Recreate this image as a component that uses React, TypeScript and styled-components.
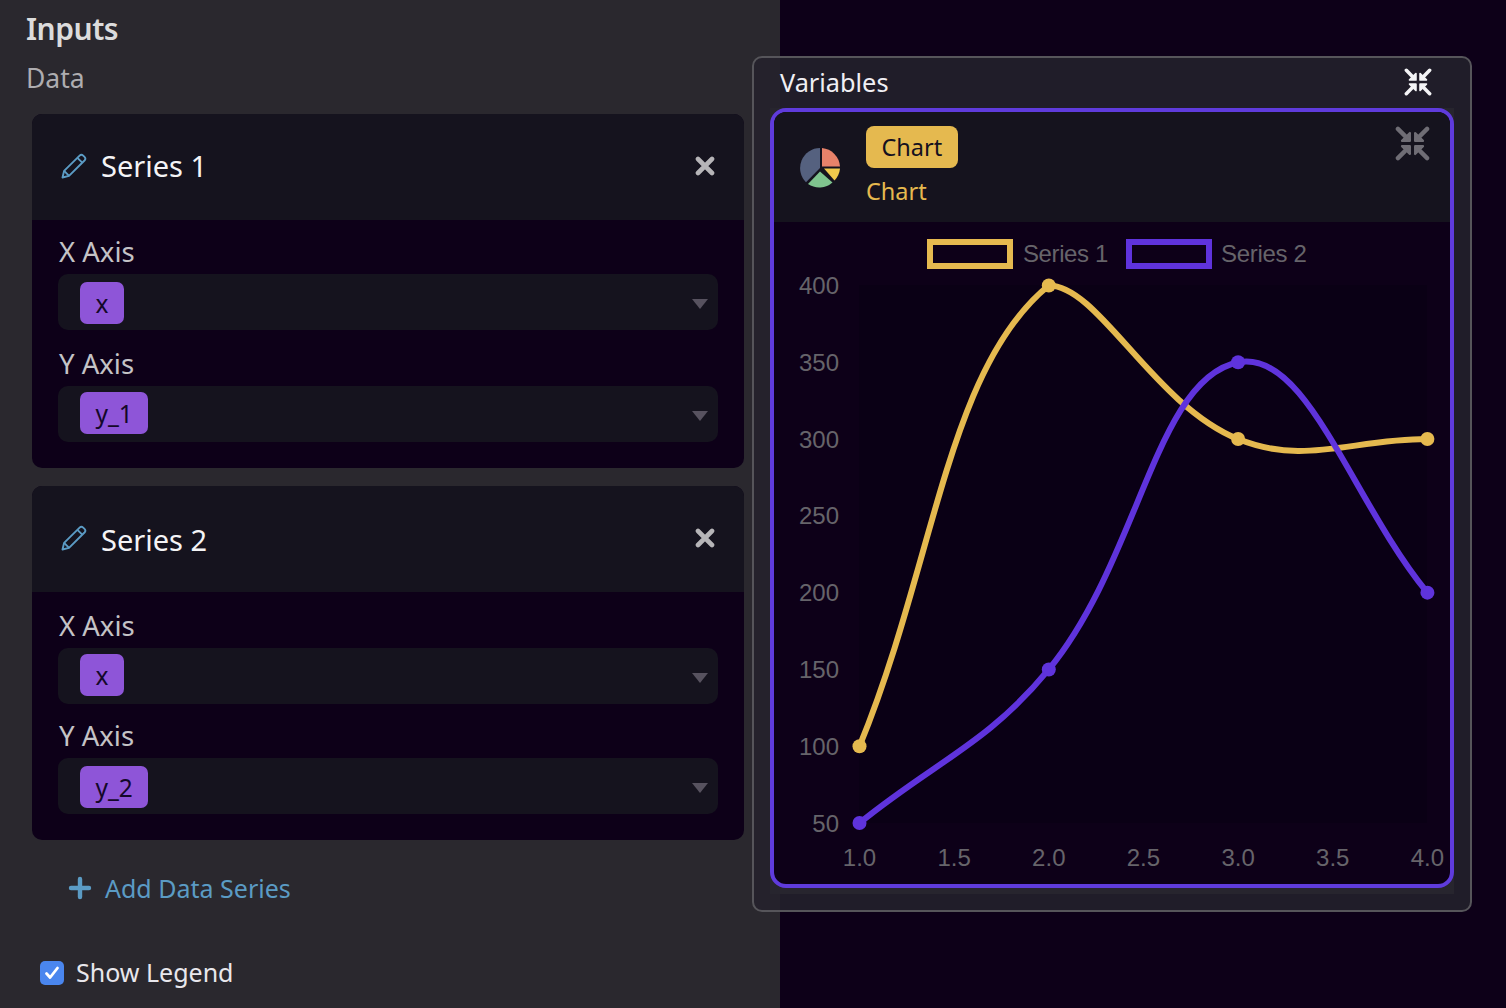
import styled, { createGlobalStyle } from "styled-components";

const GlobalStyle = createGlobalStyle`
  html, body {
    margin: 0;
    padding: 0;
    background: #0d0018;
    font-family: "Noto Sans", "Open Sans", sans-serif;
  }
  * { box-sizing: border-box; }
`;

const Page = styled.div`
  position: relative;
  width: 1506px;
  height: 1008px;
  overflow: hidden;
  background: #0d0018;
`;

const Sidebar = styled.aside`
  width: 780px;
  height: 1008px;
  background: #2a282e;
  padding: 7px 0 0 26px;
`;

const Title = styled.h1`
  margin: 0;
  height: 44px;
  font-size: 30px;
  line-height: 44px;
  font-weight: 600;
  letter-spacing: -0.5px;
  color: #dcdcdc;
`;

const Subtitle = styled.h2`
  margin: 9px 0 0;
  height: 36px;
  font-size: 26.5px;
  line-height: 36px;
  font-weight: 400;
  color: #aeadb0;
`;

const Cards = styled.div`
  margin: 18px 0 0 6px;
  width: 712px;
  display: flex;
  flex-direction: column;
  gap: 18px;
`;

const Card = styled.section`
  border-radius: 10px;
  overflow: hidden;
  background: #0d0018;
`;

const CardHeader = styled.header`
  height: 106px;
  background: #15131e;
  display: flex;
  align-items: center;
  padding: 0 29px 2px 29px;
`;

const CardName = styled.span<{ $drop: number }>`
  margin-left: 14px;
  flex: 1;
  padding-bottom: ${p => 2 - p.$drop}px;
  padding-top: ${p => p.$drop}px;
  font-size: 29px;
  color: #f4f4f6;
`;

const CardBody = styled.div<{ $top: number }>`
  padding: ${p => p.$top}px 26px 26px;
`;

const FieldLabel = styled.div`
  height: 28px;
  margin-bottom: 7px;
  padding-left: 1px;
  font-size: 27.5px;
  line-height: 26px;
  color: #c4c3c6;
`;

const SelectBox = styled.div<{ $inset: number; $after: number }>`
  height: 56px;
  margin-bottom: ${p => p.$after}px;
  border-radius: 10px;
  background: #15131e;
  padding: ${p => p.$inset}px 10px 0 22px;
  display: flex;
  align-items: flex-start;
  justify-content: space-between;
  &:last-child { margin-bottom: 0; }
`;

const Chip = styled.span`
  height: 42px;
  min-width: 44px;
  padding: 0 15.5px;
  border-radius: 7px;
  background: #8e55d8;
  color: #14082a;
  font-size: 24.5px;
  line-height: 44px;
  text-align: center;
`;

const Caret = styled.i<{ $inset: number }>`
  width: 0;
  height: 0;
  margin-top: ${p => 25 - p.$inset}px;
  border-left: 8.5px solid transparent;
  border-right: 8.5px solid transparent;
  border-top: 10px solid #57525f;
`;

const AddRow = styled.div`
  margin: 30px 0 0 42px;
  height: 36px;
  display: flex;
  align-items: center;
  gap: 13px;
  font-size: 25px;
  color: #5b9bc4;
`;

const LegendToggle = styled.label`
  margin: 49px 0 0 14px;
  height: 34px;
  display: flex;
  align-items: center;
  gap: 12px;
  font-size: 25px;
  color: #e8e7ec;
`;

const CheckBox = styled.span`
  width: 24px;
  height: 24px;
  margin-top: 2px;
  border-radius: 5px;
  background: #4a86ee;
  display: flex;
  align-items: center;
  justify-content: center;
`;

/* floating window over the page */
const VariablesWindow = styled.div`
  position: absolute;
  left: 752px;
  top: 56px;
  width: 720px;
  height: 856px;
  border: 2px solid #56555a;
  border-radius: 10px;
  background: rgba(36, 34, 44, 0.86);
  padding: 0 16px;
`;

const WindowBar = styled.div`
  height: 50px;
  padding: 0 22px 2px 10px;
  display: flex;
  align-items: center;
  justify-content: space-between;
  font-size: 25.3px;
  color: #f0eff4;
`;

const WindowCanvas = styled.div`
  width: 684px;
  height: 786px;
  background: #27252e;
`;

const Widget = styled.div`
  height: 780px;
  border: 4px solid #5f3bdc;
  border-radius: 16px;
  overflow: hidden;
  background: #0d0018;
`;

const WidgetHeader = styled.div`
  position: relative;
  height: 110px;
  background: #15131e;
  display: flex;
  align-items: flex-start;
  padding: 14px 0 0 25px;
`;

const WidgetInfo = styled.div`
  margin-left: 25px;
  display: flex;
  flex-direction: column;
  align-items: flex-start;
`;

const Badge = styled.span`
  height: 42px;
  padding: 0 15.5px;
  border-radius: 8px;
  background: #e5b94f;
  color: #14101f;
  font-size: 23.5px;
  line-height: 42px;
`;

const WidgetName = styled.span`
  margin-top: 6px;
  font-size: 23.5px;
  line-height: 34px;
  color: #e5b94f;
`;

const CornerIcon = styled.span`
  position: absolute;
  right: 20px;
  top: 14px;
  line-height: 0;
`;

const Chart = styled.svg`
  display: block;
  width: 676px;
  height: 662px;
  font-family: "Liberation Sans", Arial, sans-serif;
  font-size: 24px;
`;

const PieWrap = styled.span`
  margin-top: 21px;
  line-height: 0;
`;

function PencilIcon() {
  return (
    <svg width='26' height='26' viewBox='0 0 26 26' fill='none' stroke='#5b9bc4' strokeWidth='1.9' strokeLinejoin='round'>
      <path d='M1.5 24.5l1.6-6.6L18.6 2.6a2.6 2.6 0 0 1 3.6 0l1.3 1.3a2.6 2.6 0 0 1 0 3.6L8 22.9z' />
      <path d='M16.4 4.8l4.9 4.9M3.1 17.9l5 5' />
    </svg>
  );
}

function CloseIcon() {
  return (
    <svg width='20' height='20' viewBox='0 0 20 20' stroke='#b6b5b8' strokeWidth='4.6' strokeLinecap='round'>
      <path d='M3 3l14 14M17 3L3 17' />
    </svg>
  );
}

function CompressIcon({ size, color }: { size: number; color: string }) {
  return (
    <svg width={size} height={size} viewBox='0 0 24 24' fill={color} stroke={color} strokeLinecap='round' strokeLinejoin='round'>
      {[0, 90, 180, 270].map(r => (
        <g key={r} transform={`rotate(${r} 12 12)`}>
          <path d='M10.2 4.8v5.4H4.8z' strokeWidth='1.5' />
          <path d='M2 2L6.8 6.8' strokeWidth='3' />
        </g>
      ))}
    </svg>
  );
}

function PieIcon() {
  return (
    <svg width='42' height='42' viewBox='0 0 42 42'>
      <path d='M21 21L21 1A20 20 0 0 0 7 35.2z' fill='#55617f' />
      <path d='M23 1A20 20 0 0 1 41 19.5H23z' fill='#e8826a' />
      <path d='M41 21.5A20 20 0 0 1 35.5 33.5L25 21.5z' fill='#efc94c' />
      <path d='M9 37L21 24.5L33.5 35.5A20 20 0 0 1 9 37z' fill='#7fc48e' />
    </svg>
  );
}

type Pt = [number, number];

const xPx = (v: number) => 859.5 + (v - 1) * 189.3;
const yPx = (v: number) => 823 - ((v - 50) / 350) * 537.5;

const s1: Pt[] = ([[1, 100], [2, 400], [3, 300], [4, 300]] as Pt[]).map(([a, b]) => [xPx(a), yPx(b)]);
const s2: Pt[] = ([[1, 50], [2, 150], [3, 350], [4, 200]] as Pt[]).map(([a, b]) => [xPx(a), yPx(b)]);

// same spline as chart.js with tension 0.4, control points capped to the plot area
function spline(pts: Pt[]): string {
  const dist = (a: Pt, b: Pt) => Math.hypot(a[0] - b[0], a[1] - b[1]);
  const capY = (y: number) => Math.min(Math.max(y, yPx(400)), yPx(50));
  const ctrl = pts.map((cur, i) => {
    const prev = pts[Math.max(i - 1, 0)];
    const next = pts[Math.min(i + 1, pts.length - 1)];
    const d01 = dist(prev, cur);
    const d12 = dist(cur, next);
    const fa = (0.4 * d01) / (d01 + d12);
    const fb = (0.4 * d12) / (d01 + d12);
    return {
      p: [cur[0] - fa * (next[0] - prev[0]), capY(cur[1] - fa * (next[1] - prev[1]))] as Pt,
      n: [cur[0] + fb * (next[0] - prev[0]), capY(cur[1] + fb * (next[1] - prev[1]))] as Pt,
    };
  });
  let d = `M${pts[0][0]} ${pts[0][1]}`;
  for (let i = 1; i < pts.length; i++) {
    d += `C${ctrl[i - 1].n[0]} ${ctrl[i - 1].n[1]} ${ctrl[i].p[0]} ${ctrl[i].p[1]} ${pts[i][0]} ${pts[i][1]}`;
  }
  return d;
}

function LineChart() {
  const tick = "#66646a";
  return (
    <Chart viewBox='774 222 676 662'>
      <rect x='859' y='285' width='568' height='538' fill='#0a0015' />
      <rect x='930' y='242' width='80' height='24' fill='none' stroke='#e5b94f' strokeWidth='6' />
      <text x='1023' y='262' fill={tick} letterSpacing='-0.4'>Series 1</text>
      <rect x='1129' y='242' width='80' height='24' fill='none' stroke='#5f33dc' strokeWidth='6' />
      <text x='1221' y='262' fill={tick} letterSpacing='-0.3'>Series 2</text>
      {[400, 350, 300, 250, 200, 150, 100, 50].map(v => (
        <text key={v} x='839' y={yPx(v) + 8.5} textAnchor='end' fill={tick}>{v}</text>
      ))}
      {["1.0", "1.5", "2.0", "2.5", "3.0", "3.5", "4.0"].map(v => (
        <text key={v} x={xPx(Number(v))} y='866' textAnchor='middle' fill={tick}>{v}</text>
      ))}
      <path d={spline(s1)} fill='none' stroke='#e5b94f' strokeWidth='6' />
      {s1.map(([x, y]) => <circle key={x} cx={x} cy={y} r='7' fill='#e5b94f' />)}
      <path d={spline(s2)} fill='none' stroke='#5f33dc' strokeWidth='6' />
      {s2.map(([x, y]) => <circle key={x} cx={x} cy={y} r='7' fill='#5f33dc' />)}
    </Chart>
  );
}

const series = [
  { name: "Series 1", drop: 0, top: 19, gap: 21, yChip: "y_1", xInset: 8, yInset: 6 },
  { name: "Series 2", drop: 2, top: 21, gap: 19, yChip: "y_2", xInset: 6, yInset: 8 },
];

export default function App() {
  return (
    <Page>
      <GlobalStyle />
      <Sidebar>
        <Title>Inputs</Title>
        <Subtitle>Data</Subtitle>
        <Cards>
          {series.map(s => (
            <Card key={s.name}>
              <CardHeader>
                <PencilIcon />
                <CardName $drop={s.drop}>{s.name}</CardName>
                <CloseIcon />
              </CardHeader>
              <CardBody $top={s.top}>
                <FieldLabel>X Axis</FieldLabel>
                <SelectBox $inset={s.xInset} $after={s.gap}>
                  <Chip>x</Chip>
                  <Caret $inset={s.xInset} />
                </SelectBox>
                <FieldLabel>Y Axis</FieldLabel>
                <SelectBox $inset={s.yInset} $after={0}>
                  <Chip>{s.yChip}</Chip>
                  <Caret $inset={s.yInset} />
                </SelectBox>
              </CardBody>
            </Card>
          ))}
        </Cards>
        <AddRow>
          <svg width='24' height='24' viewBox='0 0 24 24' stroke='#5b9bc4' strokeWidth='4.4' strokeLinecap='round'>
            <path d='M12 3v18M3 12h18' />
          </svg>
          Add Data Series
        </AddRow>
        <LegendToggle>
          <CheckBox>
            <svg width='16' height='16' viewBox='0 0 16 16' fill='none' stroke='#fff' strokeWidth='2.8' strokeLinecap='round' strokeLinejoin='round'>
              <path d='M2.5 8.5l3.6 4L13.5 3' />
            </svg>
          </CheckBox>
          Show Legend
        </LegendToggle>
      </Sidebar>
      <VariablesWindow>
        <WindowBar>
          Variables
          <CompressIcon size={28} color='#f4f4f6' />
        </WindowBar>
        <WindowCanvas>
          <Widget>
            <WidgetHeader>
              <PieWrap><PieIcon /></PieWrap>
              <WidgetInfo>
                <Badge>Chart</Badge>
                <WidgetName>Chart</WidgetName>
              </WidgetInfo>
              <CornerIcon><CompressIcon size={35} color='#6f6d75' /></CornerIcon>
            </WidgetHeader>
            <LineChart />
          </Widget>
        </WindowCanvas>
      </VariablesWindow>
    </Page>
  );
}
